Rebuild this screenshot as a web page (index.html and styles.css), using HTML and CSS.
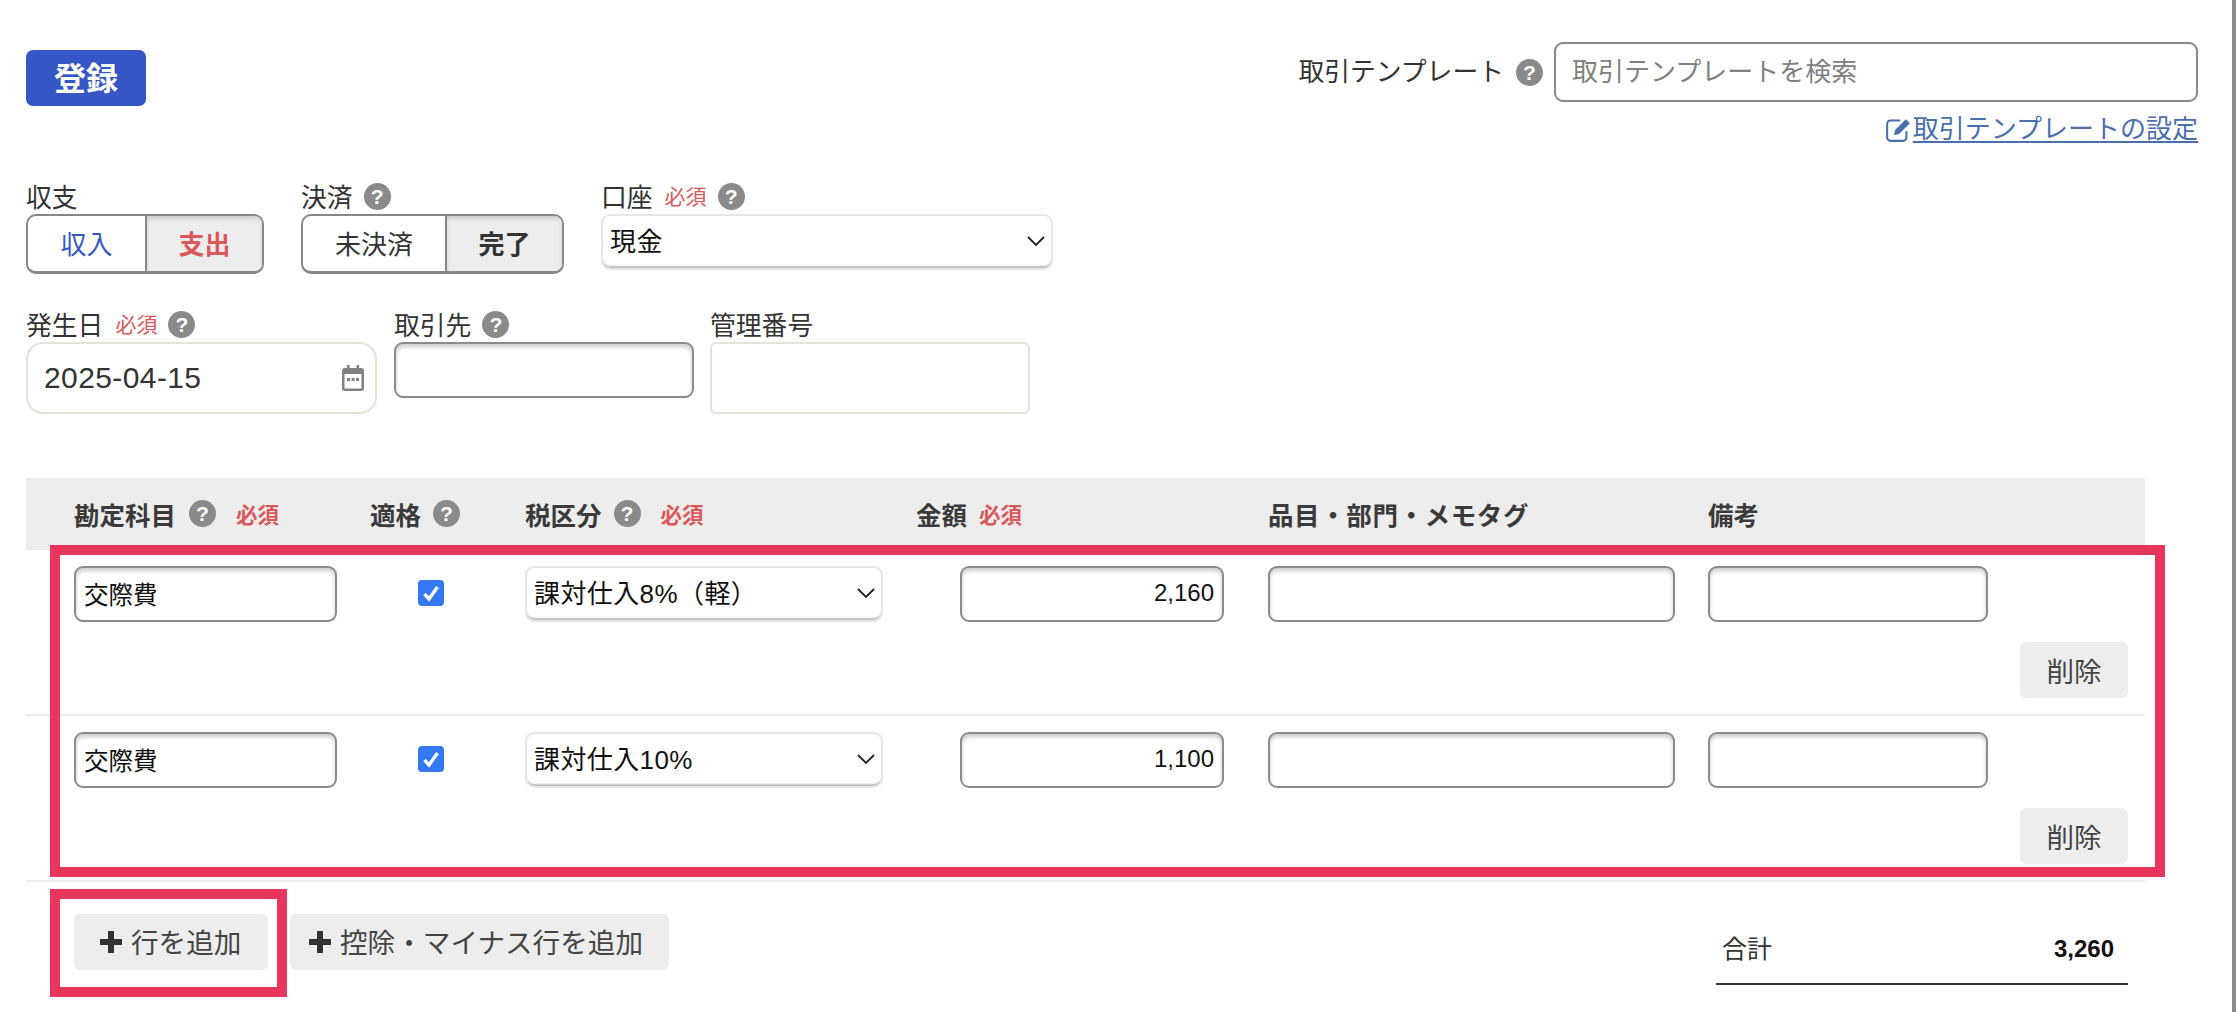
FILE: index.html
```html
<!DOCTYPE html>
<html lang="ja">
<head>
<meta charset="utf-8">
<title>取引登録</title>
<link rel="stylesheet" href="styles.css">
</head>
<body>
<main class="page">
  <header class="top">
    <button class="primary" type="button">登録</button>
    <div class="template">
      <div class="template-row">
        <span class="text-label">取引テンプレート</span>
        <span class="help">?</span>
        <input class="template-input" type="text" placeholder="取引テンプレートを検索">
      </div>
      <a class="template-link" href="#">
        <svg class="edit-icon" viewBox="1 1 22 22"><path d="M19 13.500V19a3 3 0 0 1-3 3H5a3 3 0 0 1-3-3V7a3 3 0 0 1 3-3h8.500" fill="none" stroke="currentColor" stroke-width="1.800"/><path d="M9 12.500 18.500 3 22 6.500 12.500 16 8 17z" fill="currentColor"/></svg>取引テンプレートの設定</a>
    </div>
  </header>

  <section class="form-row row-one">
    <div class="field field-type">
      <div class="label">収支</div>
      <div class="segment">
        <span class="seg seg-income">収入</span>
        <span class="seg seg-on seg-expense">支出</span>
      </div>
    </div>
    <div class="field field-settle">
      <div class="label">決済<span class="help">?</span></div>
      <div class="segment">
        <span class="seg seg-open">未決済</span>
        <span class="seg seg-on seg-done">完了</span>
      </div>
    </div>
    <div class="field field-account">
      <div class="label">口座<span class="required">必須</span><span class="help">?</span></div>
      <div class="select-box select-tall">
        <select class="select"><option>現金</option></select>
        <svg class="chevron" viewBox="0 0 18 11"><path d="M1 1l8 8 8-8" fill="none" stroke="#222" stroke-width="1.800"/></svg>
      </div>
    </div>
  </section>

  <section class="form-row row-two">
    <div class="field field-date">
      <div class="label">発生日<span class="required">必須</span><span class="help">?</span></div>
      <div class="date-box">
        <span class="date-value">2025-04-15</span>
        <svg class="calendar" viewBox="0 0 22 26"><path d="M5 0h2.500v3h7V0H17v3h2a3 3 0 0 1 3 3v17a3 3 0 0 1-3 3H3a3 3 0 0 1-3-3V6a3 3 0 0 1 3-3h2z" fill="#808080"/><rect x="2.500" y="9" width="17" height="14.500" fill="#fff"/><rect x="5" y="13" width="3" height="3" fill="#808080"/><rect x="9.500" y="13" width="3" height="3" fill="#808080"/><rect x="14" y="13" width="3" height="3" fill="#808080"/></svg>
      </div>
    </div>
    <div class="field field-partner">
      <div class="label">取引先<span class="help">?</span></div>
      <input class="input input-partner" type="text">
    </div>
    <div class="field field-number">
      <div class="label">管理番号</div>
      <input class="input-light" type="text">
    </div>
  </section>

  <section class="table">
    <div class="grid table-head">
      <div class="th">勘定科目<span class="help help-a">?</span><span class="required required-b req-a">必須</span></div>
      <div class="th">適格<span class="help help-b">?</span></div>
      <div class="th">税区分<span class="help help-b">?</span><span class="required required-b req-a">必須</span></div>
      <div class="th">金額<span class="required required-b req-b">必須</span></div>
      <div class="th th-wide">品目・部門・メモタグ</div>
      <div class="th">備考</div>
    </div>

    <div class="grid table-row">
      <input class="input cell-account" type="text" value="交際費">
      <span class="check"><svg viewBox="0 0 26 26"><path d="M6.500 14l4.500 5 8.500-12" fill="none" stroke="#fff" stroke-width="3.400"/></svg></span>
      <div class="select-box cell-tax">
        <select class="select"><option>課対仕入8%（軽）</option></select>
        <svg class="chevron" viewBox="0 0 18 11"><path d="M1 1l8 8 8-8" fill="none" stroke="#222" stroke-width="1.800"/></svg>
      </div>
      <input class="input cell-amount" type="text" value="2,160">
      <input class="input cell-item" type="text">
      <input class="input cell-note" type="text">
      <button class="soft delete" type="button">削除</button>
    </div>

    <div class="grid table-row">
      <input class="input cell-account" type="text" value="交際費">
      <span class="check"><svg viewBox="0 0 26 26"><path d="M6.500 14l4.500 5 8.500-12" fill="none" stroke="#fff" stroke-width="3.400"/></svg></span>
      <div class="select-box cell-tax">
        <select class="select"><option>課対仕入10%</option></select>
        <svg class="chevron" viewBox="0 0 18 11"><path d="M1 1l8 8 8-8" fill="none" stroke="#222" stroke-width="1.800"/></svg>
      </div>
      <input class="input cell-amount" type="text" value="1,100">
      <input class="input cell-item" type="text">
      <input class="input cell-note" type="text">
      <button class="soft delete" type="button">削除</button>
    </div>

    <footer class="table-foot">
      <button class="soft add add-row" type="button"><svg class="plus" viewBox="0 0 22 22"><path d="M8 0h6v8h8v6h-8v8H8v-8H0V8h8z" fill="#333"/></svg>行を追加</button>
      <button class="soft add add-minus" type="button"><svg class="plus" viewBox="0 0 22 22"><path d="M8 0h6v8h8v6h-8v8H8v-8H0V8h8z" fill="#333"/></svg>控除・マイナス行を追加</button>
      <div class="total"><span class="total-label">合計</span><span class="total-value">3,260</span></div>
    </footer>
  </section>

  <div class="mark mark-rows"></div>
  <div class="mark mark-add"></div>
  <svg class="edge edge-top" viewBox="0 0 4 24"><path d="M4 0 0 6M0 17l4 7" fill="none" stroke="#666" stroke-width="1.200"/></svg>
  <svg class="edge edge-bottom" viewBox="0 0 4 6"><path d="M4 0 0 6" fill="none" stroke="#555" stroke-width="1.400"/></svg>
</main>
</body>
</html>
```

FILE: styles.css
```css
* { box-sizing: border-box; }
html, body { margin: 0; padding: 0; background: #fff; }
body, input, select, button {
  font-family: "Liberation Sans", "Noto Sans CJK JP", sans-serif;
  color: #333;
}
.page {
  position: relative;
  width: 2236px;
  height: 1012px;
  padding-left: 26px;
  border-right: 4px solid #8a8a8a;
  overflow: hidden;
}

/* top */
.top {
  display: flex;
  justify-content: space-between;
  align-items: flex-start;
  height: 140px;
  padding: 42px 34px 0 0;
}
.primary {
  width: 120px;
  height: 56px;
  margin-top: 8px;
  padding: 0 0 5px;
  border: 0;
  border-radius: 7px;
  background: #3557c5;
  color: #fff;
  font-size: 32px;
  font-weight: 700;
}
.template { display: flex; flex-direction: column; align-items: flex-end; }
.template-row { display: flex; align-items: center; }
.text-label { font-size: 25.800px; line-height: 30px; }
.template-row .help { margin: 0 11px 0 12px; }
.template-input {
  width: 644px;
  height: 60px;
  padding: 0 16px;
  border: 2px solid #888;
  border-radius: 9px;
  font-size: 26px;
  outline: 0;
}
.template-input::placeholder { color: #808080; opacity: 1; }
.template-link {
  display: flex;
  align-items: center;
  height: 26px;
  margin-top: 14px;
  color: #4a6fad;
  font-size: 26px;
  line-height: 26px;
  text-decoration: underline;
  text-underline-offset: 3px;
}
.edit-icon { width: 25px; height: 25px; margin-right: 2px; }

/* help + required */
.help {
  display: inline-block;
  flex: none;
  width: 27px;
  height: 27px;
  border-radius: 50%;
  background: #8a8a8a;
  color: #fff;
  font-family: "Liberation Sans", sans-serif;
  font-size: 21px;
  font-weight: 700;
  line-height: 27px;
  text-align: center;
}
.required {
  margin-left: 12px;
  color: #d9595b;
  font-size: 21px;
  font-weight: 400;
}

/* form rows */
.form-row { display: flex; align-items: flex-start; }
.row-one { margin-top: 42px; gap: 37px; }
.row-two { margin-top: 36px; gap: 17px; }
.field { display: flex; flex-direction: column; }
.label {
  display: flex;
  align-items: center;
  height: 28px;
  margin-bottom: 4px;
  padding-bottom: 2px;
  font-size: 25.800px;
}
.label .help { margin: 2px 0 0 11px; }
.field-type { width: 238px; }
.field-settle { width: 263px; }
.field-account { width: 452px; }
.field-date { width: 351px; }
.field-partner { width: 300px; }
.field-number { width: 320px; margin-left: -1px; }

.segment {
  display: flex;
  height: 60px;
  border: 2px solid #888;
  border-bottom-width: 3px;
  border-radius: 10px;
  overflow: hidden;
}
.seg {
  display: flex;
  align-items: center;
  justify-content: center;
  padding-bottom: 3px;
  font-size: 26px;
}
.seg-on {
  border-left: 2px solid #888;
  background: #eeedee;
  box-shadow: inset 0 3px 4px rgba(0, 0, 0, .14);
  font-weight: 700;
}
.seg-income { width: 117px; color: #3557c5; }
.seg-expense { flex: 1; color: #d9595b; }
.seg-open { width: 142px; }
.seg-done { flex: 1; }

.select-box { position: relative; height: 56px; }
.select {
  display: block;
  width: 100%;
  height: 100%;
  padding: 0 40px 0 7px;
  border: 2px solid #e7e7e7;
  border-radius: 9px;
  background: #fff;
  box-shadow: inset 0 -3px 2px -1px #bcbcbc;
  color: #111;
  font-size: 26px;
  letter-spacing: .4px;
  appearance: none;
  outline: 0;
}
.chevron {
  position: absolute;
  top: 50%;
  right: 8px;
  width: 18px;
  height: 11px;
  margin-top: -6px;
}

.date-box {
  display: flex;
  align-items: center;
  justify-content: space-between;
  height: 72px;
  padding: 0 11px 0 16px;
  border: 2px solid #e5e3d8;
  border-radius: 17px;
}
.date-value { font-size: 30px; letter-spacing: .4px; }
.calendar { width: 22px; height: 26px; }

.input {
  display: block;
  height: 56px;
  padding: 0 8px 2px;
  border: 2px solid #8b8b8b;
  border-radius: 9px;
  background: #fff;
  box-shadow: inset 0 3px 4px rgba(0, 0, 0, .2);
  color: #111;
  font-size: 24.500px;
  outline: 0;
}
.input-partner { width: 100%; }
.input-light {
  display: block;
  width: 100%;
  height: 72px;
  border: 2px solid #e5e3d8;
  border-radius: 6px;
  outline: 0;
}

/* table */
.table { width: 2119px; margin-top: 64px; }
.grid {
  display: grid;
  grid-template-columns: 296px 155px 391px 352px 440px 1fr;
  padding-left: 48px;
}
.table-head {
  align-items: center;
  height: 72px;
  padding-bottom: 2px;
  background: #eeedee;
}
.th {
  display: flex;
  align-items: center;
  color: #3a3a3a;
  font-size: 25.500px;
  font-weight: 700;
}
.th-wide { letter-spacing: .6px; }
.help-a { margin-left: 13px; }
.help-b { margin-left: 12px; }
.required-b { font-weight: 700; font-size: 21.500px; }
.req-a { margin-left: 20px; }
.req-b { margin-left: 12px; }

.table-row {
  align-items: start;
  padding-top: 16px;
  padding-bottom: 16px;
  border-bottom: 2px solid #eeeeee;
}
.cell-account { width: 263px; }
.check {
  display: block;
  width: 26px;
  height: 26px;
  margin: 14px 0 0 48px;
  border-radius: 4px;
  background: #3478f6;
}
.check svg { display: block; width: 26px; height: 26px; }
.cell-tax { width: 358px; }
.cell-amount { width: 264px; margin-left: 44px; font-size: 24px; text-align: right; }
.cell-item { width: 407px; }
.cell-note { width: 280px; }

.soft {
  border: 0;
  border-radius: 6px;
  background: #eeedee;
  color: #444;
  font-size: 27.600px;
  padding: 0;
}
.delete {
  grid-column: 1 / -1;
  justify-self: end;
  width: 108px;
  height: 56px;
  margin: 20px 17px 0 0;
}

.table-foot {
  display: flex;
  align-items: flex-start;
  padding-left: 48px;
  margin-top: 32px;
  gap: 22px;
}
.add {
  display: flex;
  align-items: center;
  height: 56px;
  padding: 0 0 2px 26px;
}
.add-row { width: 194px; }
.add-minus { width: 379px; padding-left: 19px; }
.plus { width: 22px; height: 22px; margin: 2px 9px 0 0; }
.total {
  display: flex;
  justify-content: space-between;
  align-items: center;
  width: 412px;
  height: 71px;
  margin-left: auto;
  margin-right: 17px;
  padding: 0 14px 0 6px;
  border-bottom: 2px solid #333;
}
.total-label { font-size: 25px; margin-top: -3px; }
.total-value { font-size: 24px; font-weight: 700; color: #111; }

/* annotations */
.mark {
  position: absolute;
  border: 10px solid #e8355e;
  pointer-events: none;
}
.mark-rows { left: 50px; top: 545px; width: 2115px; height: 332px; }
.mark-add { left: 50px; top: 889px; width: 237px; height: 108px; }
.edge { position: absolute; right: -4px; width: 4px; }
.edge-top { top: 52px; height: 24px; }
.edge-bottom { top: 938px; height: 6px; }
```
